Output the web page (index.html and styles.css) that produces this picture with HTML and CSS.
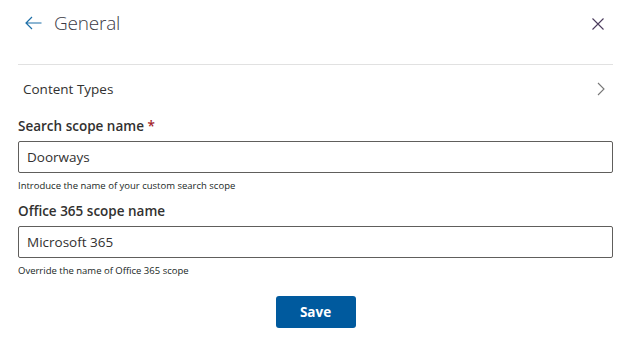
FILE: index.html
```html
<!DOCTYPE html>
<html lang="en">
<head>
<meta charset="utf-8">
<title>General</title>
<link rel="stylesheet" href="styles.css">
</head>
<body>
<div class="panel">
  <header class="header">
    <div class="title-group">
      <button class="icon-btn back" aria-label="Back">
        <svg width="17" height="14" viewBox="0 0 17 14"><path d="M7 1 L1 7 L7 13 M1 7 H16.5" fill="none" stroke="#1d6fa8" stroke-width="1.2"/></svg>
      </button>
      <h1 class="title">General</h1>
    </div>
    <button class="icon-btn close" aria-label="Close">
      <svg width="12" height="12" viewBox="0 0 12 12"><path d="M0.5 0.5 L11.5 11.5 M11.5 0.5 L0.5 11.5" fill="none" stroke="#4b3b5c" stroke-width="1.1"/></svg>
    </button>
  </header>
  <div class="divider"></div>
  <div class="nav-row">
    <span class="nav-label">Content Types</span>
    <svg class="chev" width="8" height="14" viewBox="0 0 8 14"><path d="M1 1 L7 7 L1 13" fill="none" stroke="#777" stroke-width="1.1"/></svg>
  </div>
  <div class="field">
    <label class="label">Search scope name <span class="req">*</span></label>
    <div class="input">Doorways</div>
    <div class="help">Introduce the name of your custom search scope</div>
  </div>
  <div class="field">
    <label class="label">Office 365 scope name</label>
    <div class="input">Microsoft 365</div>
    <div class="help">Override the name of Office 365 scope</div>
  </div>
  <div class="actions">
    <button class="save">Save</button>
  </div>
</div>
</body>
</html>
```

FILE: styles.css
```css
* { box-sizing: border-box; }
html, body { margin: 0; padding: 0; background: #fff; }
body {
  font-family: "Open Sans", "Noto Sans", "Liberation Sans", sans-serif;
  color: #323130;
  width: 630px;
  height: 347px;
  overflow: hidden;
}
.panel { padding: 0 17px 0 18px; }
.header {
  height: 46px;
  display: flex;
  align-items: center;
  justify-content: space-between;
}
.title-group { display: flex; align-items: center; }
.icon-btn {
  border: 0;
  background: none;
  padding: 0;
  display: flex;
  align-items: center;
  justify-content: center;
  cursor: pointer;
}
.back { margin-left: 7px; width: 17px; height: 14px; }
.title {
  margin: 0 0 0 12px;
  font-size: 19px;
  font-weight: 300;
  color: #3b3a45;
  line-height: 24px;
  letter-spacing: -0.2px;
}
.close { margin-right: 9px; width: 12px; height: 12px; margin-top: 1px; }
.divider {
  height: 1px;
  background: #e1e1e1;
  margin-top: 18px;
}
.nav-row {
  height: 48px;
  display: flex;
  align-items: center;
  justify-content: space-between;
  padding-left: 5px;
  padding-right: 8px;
  padding-bottom: 1px;
}
.nav-label { font-size: 13.5px; color: #323130; }
.field { display: flex; flex-direction: column; }
.label {
  font-size: 13.5px;
  font-weight: 600;
  color: #323130;
  line-height: 20px;
  padding: 3px 0 5px;
}
.req { color: #a4262c; }
.input {
  height: 32px;
  border: 1px solid #605e5c;
  border-radius: 2px;
  padding: 0 8px;
  display: flex;
  align-items: center;
  font-size: 13.5px;
  color: #323130;
}
.help {
  font-size: 9.5px;
  font-weight: 500;
  color: #201f1e;
  line-height: 14px;
  padding: 6px 0 5px;
}
.actions {
  display: flex;
  justify-content: center;
  padding-top: 13px;
}
.save {
  width: 80px;
  height: 32px;
  border: 0;
  border-radius: 3px;
  background: #005a9e;
  color: #fff;
  font-family: inherit;
  font-size: 13.5px;
  font-weight: 700;
}
```
